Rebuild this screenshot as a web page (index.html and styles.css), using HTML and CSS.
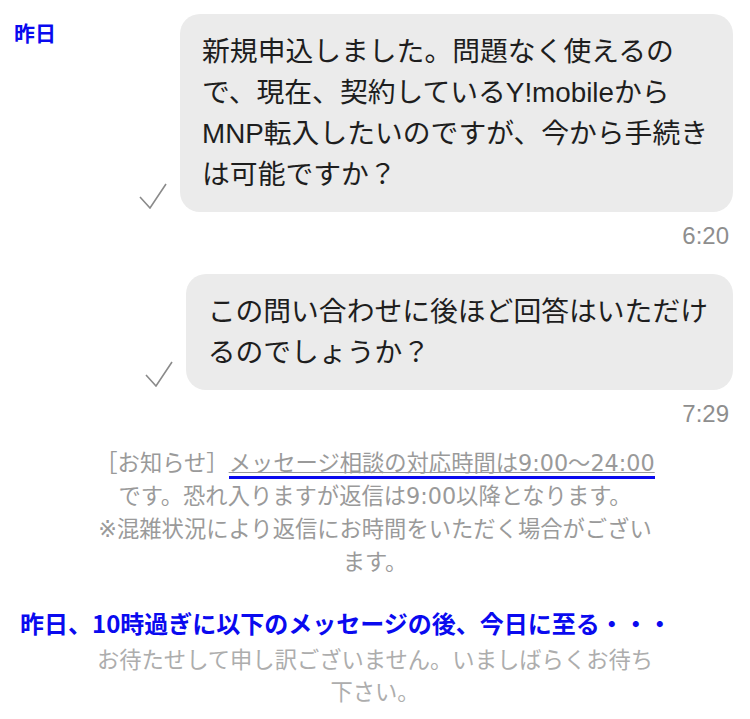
FILE: index.html
```html
<!DOCTYPE html>
<html lang="ja">
<head>
  <meta charset="UTF-8" />
  <meta name="viewport" content="width=device-width, initial-scale=1.0"/>
  <title>メッセージ相談</title>
  <link rel="stylesheet" href="styles.css">
</head>
<body>

  <div class="row">
    <div class="note-label">昨日</div>
    <svg class="check" width="28" height="26" viewBox="0 0 28 26"><path d="M1 14 L11 25 L27 1" /></svg>
    <div class="bubble">新規申込しました。問題なく使えるの<br>で、現在、契約しているY!mobileから<br>MNP転入したいのですが、今から手続き<br>は可能ですか？</div>
  </div>
  <div class="time">6:20</div>

  <div class="row second">
    <svg class="check" width="28" height="26" viewBox="0 0 28 26"><path d="M1 14 L11 25 L27 1" /></svg>
    <div class="bubble">この問い合わせに後ほど回答はいただけ<br>るのでしょうか？</div>
  </div>
  <div class="time">7:29</div>

  <div class="notice">
    ［お知らせ］<span class="marked">メッセージ相談の対応時間は9:00〜24:00</span><br>
    です。恐れ入りますが返信は9:00以降となります。<br>
    ※混雑状況により返信にお時間をいただく場合がござい<br>
    ます。
  </div>

  <div class="note-line">昨日、10時過ぎに以下のメッセージの後、今日に至る・・・</div>

  <div class="notice reply">
    お待たせして申し訳ございません。いましばらくお待ち<br>
    下さい。
  </div>

</body>
</html>
```

FILE: styles.css
```css
body {
  font-family: "Liberation Sans", "Noto Sans CJK JP", sans-serif;
  margin: 0;
  padding: 14px 0 0;
  background: #ffffff;
  color: #1e1e1e;
}

.row {
  display: flex;
  align-items: flex-end;
  justify-content: flex-end;
  gap: 13px;
  padding-right: 17px;
}

.row.second {
  margin-top: 23px;
}

.note-label {
  align-self: flex-start;
  margin: 3px auto 0 14px;
  font-family: "Noto Sans CJK JP", sans-serif;
  font-weight: bold;
  font-size: 21px;
  line-height: 30px;
  color: #0a0aef;
}

.check {
  margin-bottom: 3px;
}

.check path {
  fill: none;
  stroke: #8a8a8a;
  stroke-width: 1.6;
}

.bubble {
  background: #ebebeb;
  border-radius: 20px;
  padding: 17px 25px 17px 22px;
  font-size: 27.8px;
  line-height: 41px;
  white-space: nowrap;
}

.time {
  text-align: right;
  padding-right: 21px;
  margin-top: 9px;
  font-size: 24px;
  line-height: 30px;
  color: #8e8e8e;
}

.notice {
  margin-top: 18px;
  text-align: center;
  font-family: "DejaVu Sans", "Noto Sans CJK JP", sans-serif;
  font-size: 22.3px;
  line-height: 33px;
  color: #9a9a9a;
  white-space: nowrap;
}

.marked {
  text-decoration: underline;
  text-decoration-color: #9a9a9a;
  text-decoration-thickness: 1px;
  border-bottom: 3px solid #0a0aef;
}

.note-line {
  margin-top: 27px;
  padding-left: 20px;
  font-family: "Noto Sans CJK JP", sans-serif;
  font-weight: bold;
  font-size: 24px;
  line-height: 34px;
  color: #0a0aef;
  white-space: nowrap;
}

.reply {
  margin-top: 4px;
  line-height: 32px;
  color: #adadad;
}
```
